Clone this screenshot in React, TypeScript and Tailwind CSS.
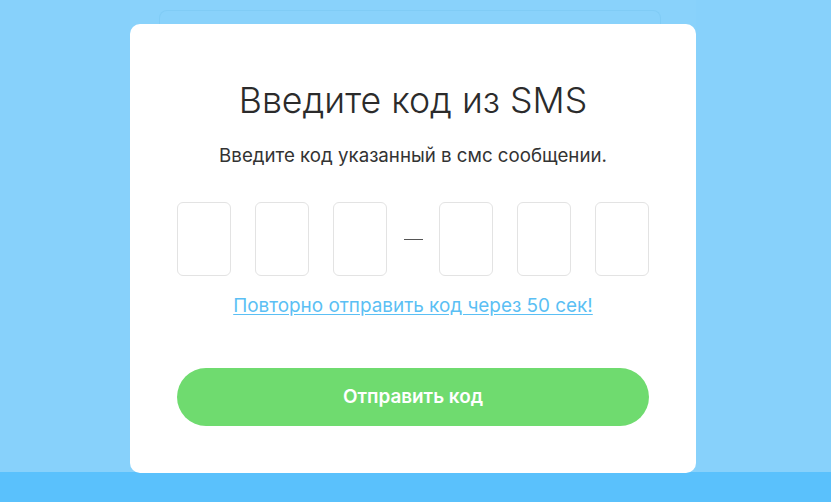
import React from 'react';

const CodeBox: React.FC = () => (
  <input
    maxLength={1}
    className="w-[54px] h-[74px] shrink-0 rounded-[6px] border border-[#e3e3e3] bg-white text-center text-[28px] text-[#333] outline-none"
  />
);

export default function App() {
  return (
    <div
      className="relative w-full h-[502px] overflow-hidden bg-[#87d1fb] flex flex-col"
      style={{ fontFamily: 'Inter, "Noto Sans", sans-serif' }}
    >
      {/* page behind the modal */}
      <div className="flex-1 flex justify-center">
        <div className="w-[566px] ml-[-6px] bg-[#89d2fb] pt-[10px] flex justify-center">
          <div className="w-[502px] h-[40px] ml-[-6px] rounded-t-[8px] border border-b-0 border-[#80ccf6]"></div>
        </div>
      </div>
      <div className="h-[30px] bg-[#5ac1fc]"></div>

      {/* modal */}
      <div className="absolute left-[130px] top-[24px] w-[566px] h-[449px] bg-white rounded-[10px] px-[47px] pt-[54px] flex flex-col items-center">
        <h1 className="text-[35.7px] leading-[44px] font-light text-[#2b2b2b] whitespace-nowrap">Введите код из SMS</h1>
        <p className="mt-[23px] text-[18.7px] leading-[22px] text-[#333] whitespace-nowrap">Введите код указанный в смс сообщении.</p>

        <div className="mt-[35px] w-full flex items-center gap-[24px]">
          <CodeBox />
          <CodeBox />
          <CodeBox />
          <div className="w-[4px] shrink-0 flex justify-center">
            <div className="w-[19px] h-[1px] shrink-0 bg-[#555]"></div>
          </div>
          <CodeBox />
          <CodeBox />
          <CodeBox />
        </div>

        <a href="#" className="mt-[18px] text-[18.9px] leading-[24px] text-[#5bbff4] underline underline-offset-2 whitespace-nowrap">
          Повторно отправить код через 50 сек!
        </a>

        <button className="mt-[50px] w-full h-[58px] rounded-full bg-[#6fdb6f] text-white text-[18.9px] font-semibold">
          Отправить код
        </button>
      </div>
    </div>
  );
}
